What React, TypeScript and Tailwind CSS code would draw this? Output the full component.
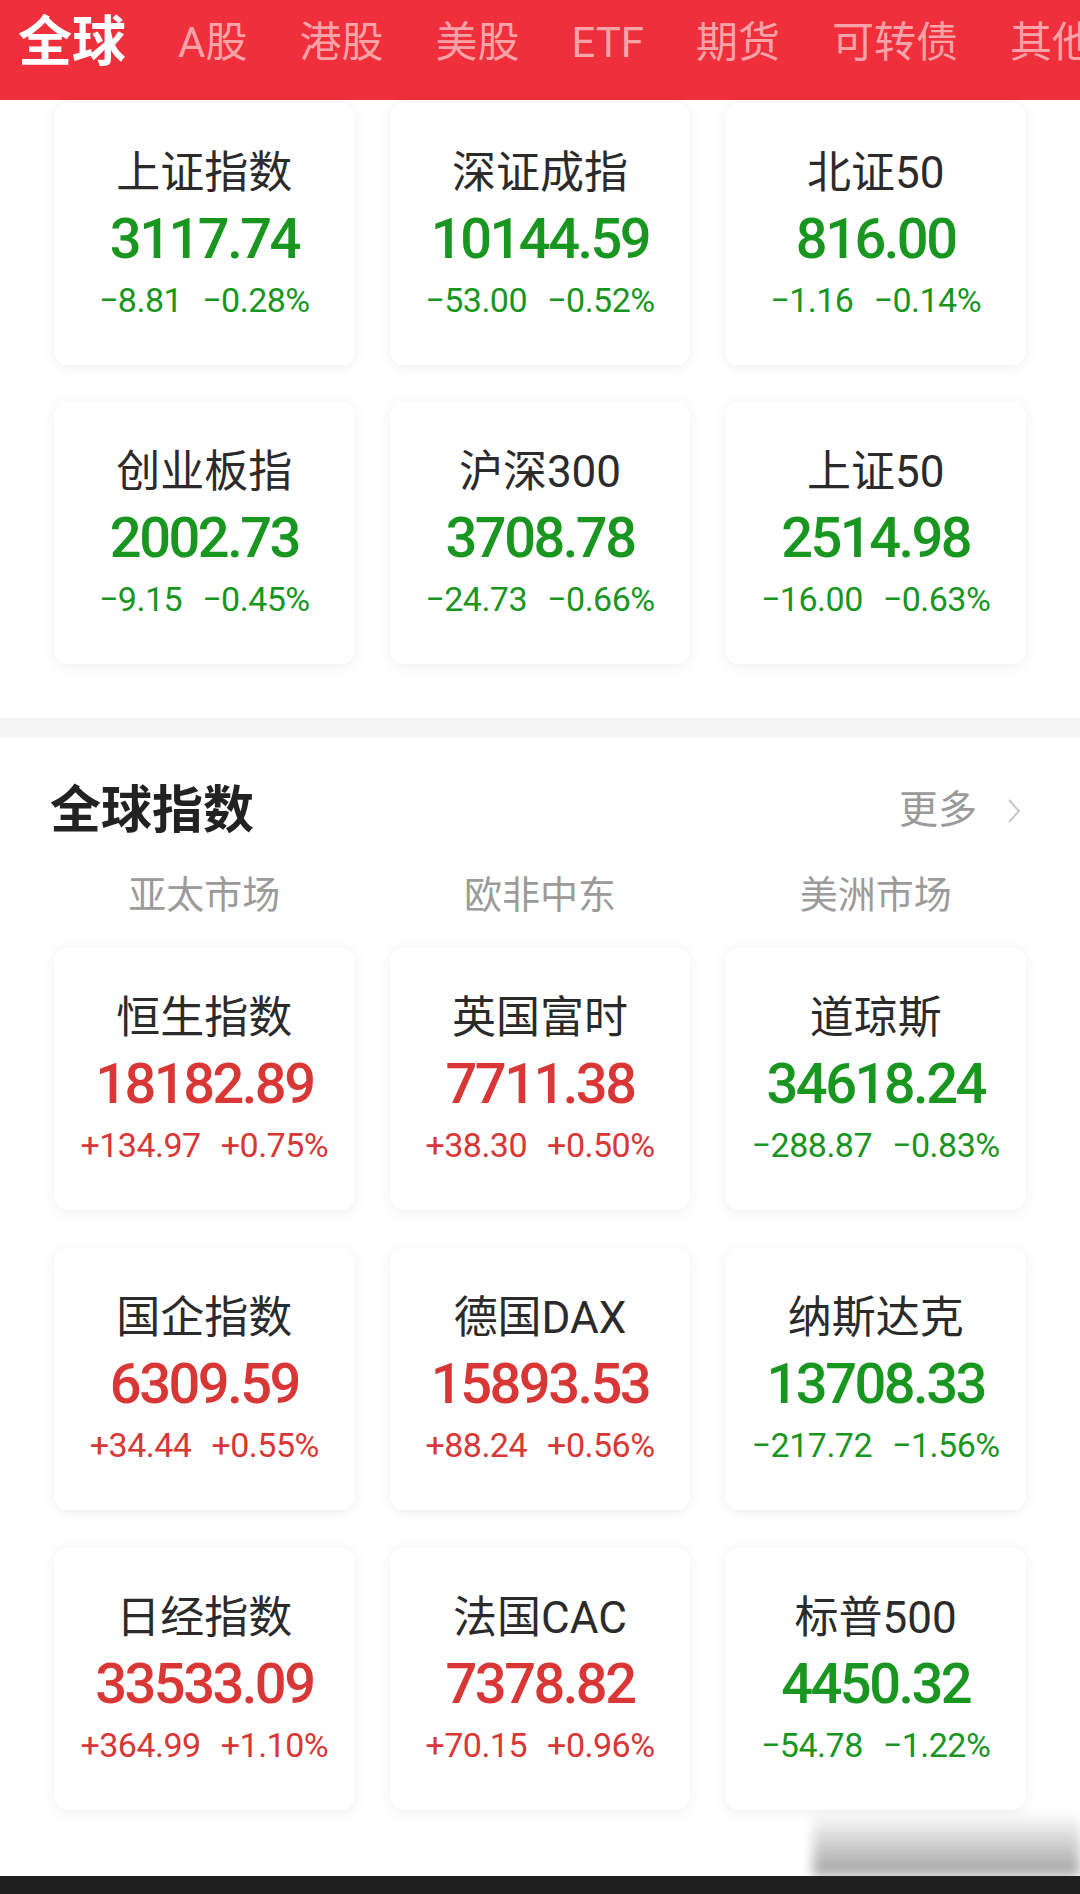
import React from "react";

type Quote = {
  name: string;
  value: string;
  change: string;
  pct: string;
  up: boolean;
};

const TABS = ["A股", "港股", "美股", "ETF", "期货", "可转债", "其他"];

const A_SHARE: Quote[] = [
  { name: "上证指数", value: "3117.74", change: "−8.81", pct: "−0.28%", up: false },
  { name: "深证成指", value: "10144.59", change: "−53.00", pct: "−0.52%", up: false },
  { name: "北证50", value: "816.00", change: "−1.16", pct: "−0.14%", up: false },
  { name: "创业板指", value: "2002.73", change: "−9.15", pct: "−0.45%", up: false },
  { name: "沪深300", value: "3708.78", change: "−24.73", pct: "−0.66%", up: false },
  { name: "上证50", value: "2514.98", change: "−16.00", pct: "−0.63%", up: false },
];

const GLOBAL: Quote[] = [
  { name: "恒生指数", value: "18182.89", change: "+134.97", pct: "+0.75%", up: true },
  { name: "英国富时", value: "7711.38", change: "+38.30", pct: "+0.50%", up: true },
  { name: "道琼斯", value: "34618.24", change: "−288.87", pct: "−0.83%", up: false },
  { name: "国企指数", value: "6309.59", change: "+34.44", pct: "+0.55%", up: true },
  { name: "德国DAX", value: "15893.53", change: "+88.24", pct: "+0.56%", up: true },
  { name: "纳斯达克", value: "13708.33", change: "−217.72", pct: "−1.56%", up: false },
  { name: "日经指数", value: "33533.09", change: "+364.99", pct: "+1.10%", up: true },
  { name: "法国CAC", value: "7378.82", change: "+70.15", pct: "+0.96%", up: true },
  { name: "标普500", value: "4450.32", change: "−54.78", pct: "−1.22%", up: false },
];

const FONT = "font-['Roboto','Noto_Sans_CJK_SC',sans-serif]";

const QuoteCard: React.FC<{ q: Quote }> = ({ q }) => {
  const color = q.up ? "text-[#d93636]" : "text-[#18961f]";
  return (
    <div className="h-[262px] rounded-[14px] bg-white shadow-[0_2px_14px_rgba(0,0,0,0.07)] flex flex-col items-center pt-[48px]">
      <div className="text-[44px] leading-none text-[#2b2b2b]">{q.name}</div>
      <div className={`mt-[16px] text-[56px] leading-none font-medium tracking-[-2.5px] ${color}`}>{q.value}</div>
      <div className={`mt-[16px] flex gap-[20px] text-[34px] leading-none tracking-[-0.5px] ${color}`}>
        <span>{q.change}</span>
        <span>{q.pct}</span>
      </div>
    </div>
  );
};

export default function App() {
  return (
    <div className={`relative w-[1080px] h-[1894px] bg-white overflow-hidden ${FONT}`}>
      {/* top tab bar, last tab runs off the right edge like the app */}
      <div className="h-[100px] bg-[#ef2f3b] flex items-start pt-[20px] pl-[18px] gap-[52px] whitespace-nowrap overflow-hidden">
        <span className="text-[54px] leading-[46px] font-bold text-white">全球</span>
        {TABS.map((t) => (
          <span key={t} className="text-[42px] leading-[46px] text-[#f9a3a8]">
            {t}
          </span>
        ))}
      </div>

      {/* A-share indices */}
      <div className="grid grid-cols-3 gap-x-[35px] gap-y-[37px] px-[54px] pt-[3px]">
        {A_SHARE.map((q) => (
          <QuoteCard key={q.name} q={q} />
        ))}
      </div>

      <div className="mt-[54px] h-[19px] bg-[#f5f5f5]" />

      {/* global indices */}
      <div className="flex items-center justify-between pl-[50px] pr-[59px] pt-[48px]">
        <span className="text-[51px] leading-none font-bold text-[#222]">全球指数</span>
        <div className="flex items-center gap-[30px]">
          <span className="text-[39px] leading-none text-[#9a9a9a]">更多</span>
          <svg width="14" height="26" viewBox="0 0 14 26" fill="none">
            <polyline points="2,2 12,13 2,24" stroke="#c9c9c9" strokeWidth="2" />
          </svg>
        </div>
      </div>

      <div className="grid grid-cols-3 gap-x-[35px] px-[54px] mt-[40px]">
        {["亚太市场", "欧非中东", "美洲市场"].map((t) => (
          <div key={t} className="text-center text-[38px] leading-none text-[#9b9b9b]">
            {t}
          </div>
        ))}
      </div>

      <div className="grid grid-cols-3 gap-x-[35px] gap-y-[38px] px-[54px] mt-[34px]">
        {GLOBAL.map((q) => (
          <QuoteCard key={q.name} q={q} />
        ))}
      </div>

      {/* watermark smudge */}
      <div className="absolute right-0 bottom-[18px] w-[267px] h-[64px] bg-gradient-to-b from-transparent to-[#8a8a8a] blur-[6px] opacity-80" />
      {/* bottom bar */}
      <div className="absolute left-0 right-0 bottom-0 h-[18px] bg-[#1f1f1f]" />
    </div>
  );
}
